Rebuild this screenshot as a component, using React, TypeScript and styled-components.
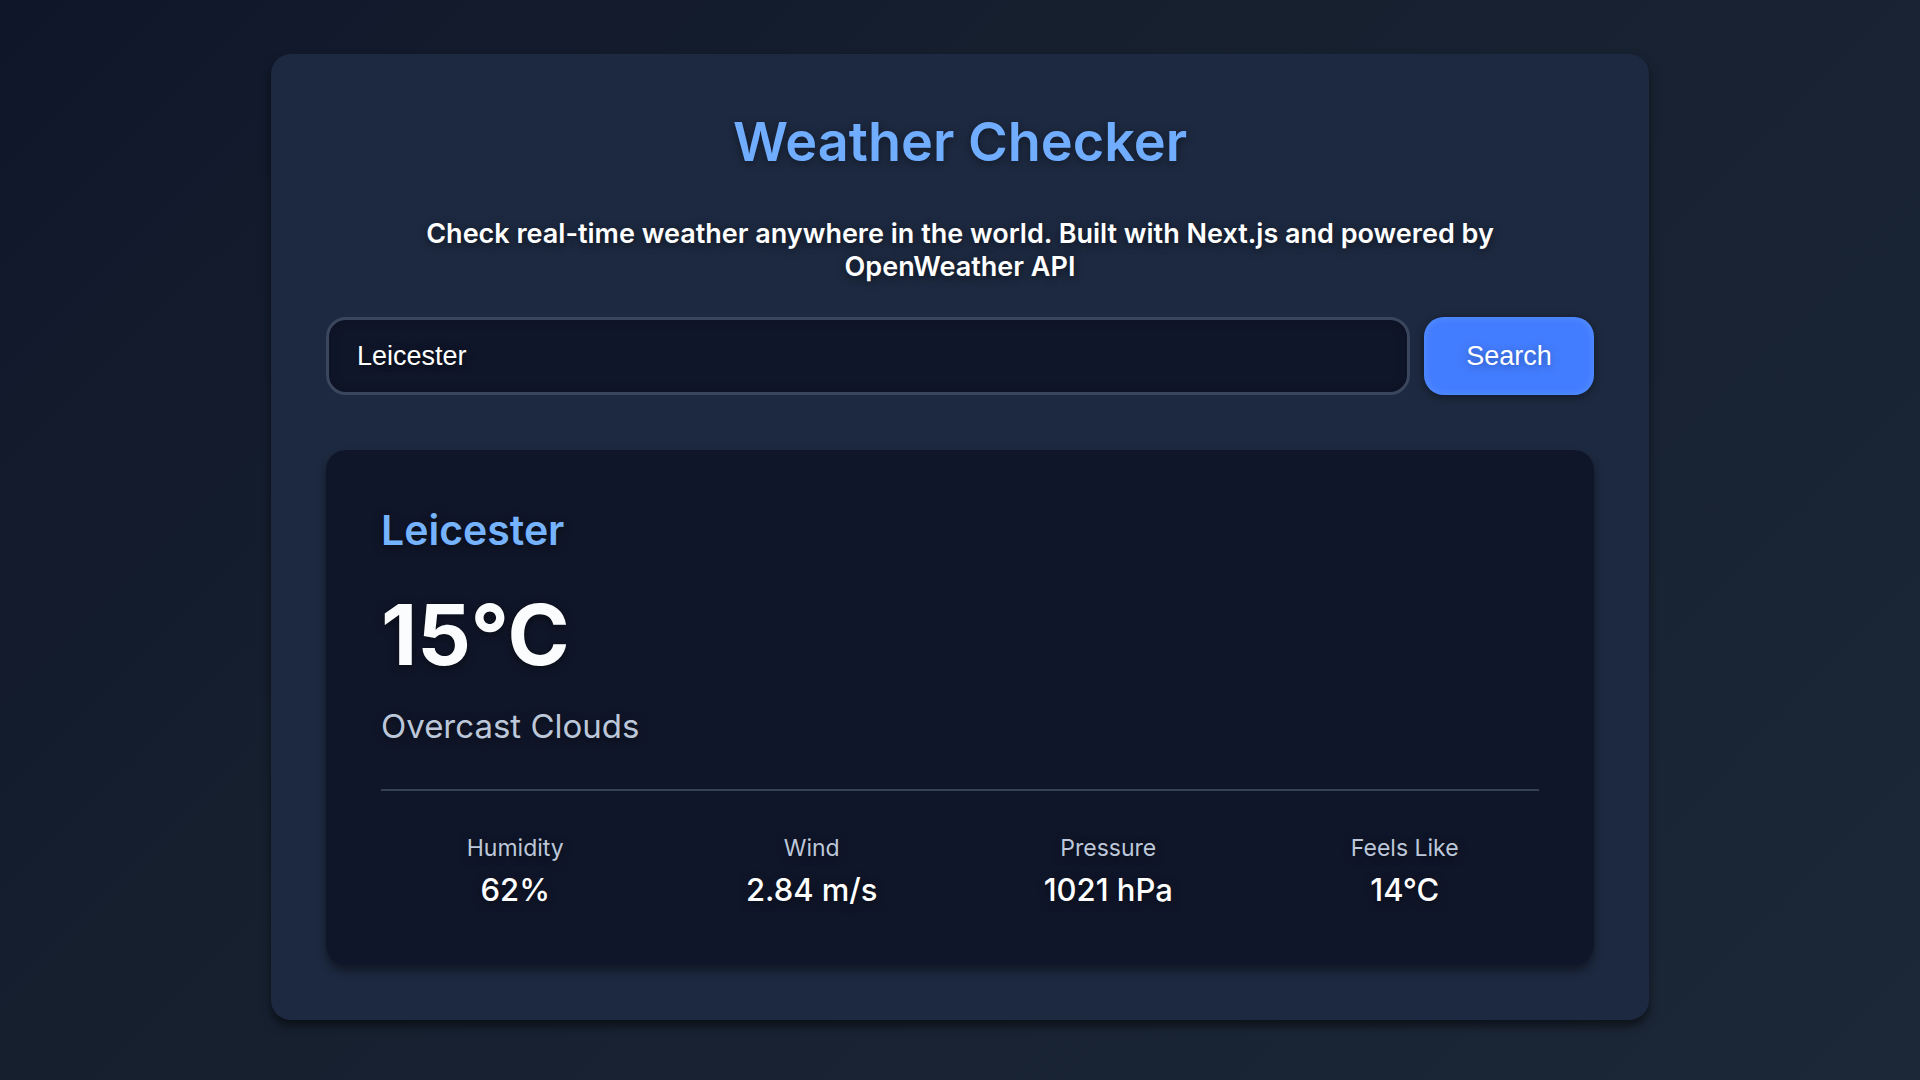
import React, { useState } from "react";
import styled, { createGlobalStyle } from "styled-components";

const GlobalStyle = createGlobalStyle`
  * { box-sizing: border-box; }
  body {
    margin: 0;
    min-height: 100vh;
    color: #ffffff;
    font-family: Inter, "Liberation Sans", sans-serif;
    background: linear-gradient(135deg, #10162a 0%, #151f2e 35%, #1c2737 100%);
  }
  h1, h2, p, dl, dd { margin: 0; }
`;

const Page = styled.main`
  display: flex;
  align-items: center;
  justify-content: center;
  min-height: 100vh;
  padding: 48px 24px 54px;
`;

const Panel = styled.section`
  width: 100%;
  max-width: 1378px;
  padding: 55px;
  border-radius: 20px;
  background: #1d2940;
  box-shadow: 0 6px 10px rgba(0, 0, 0, 0.5);
`;

const Title = styled.h1`
  color: #70adff;
  font-size: 54px;
  font-weight: 600;
  line-height: 66px;
  text-align: center;
  text-shadow: 0 2px 8px rgba(0, 0, 0, 0.4);
`;

const Intro = styled.p`
  margin-top: 42px;
  padding: 0 56px;
  font-size: 27px;
  font-weight: 600;
  line-height: 33px;
  text-align: center;
  text-shadow: 0 2px 8px rgba(0, 0, 0, 0.5);
`;

const SearchForm = styled.form`
  display: flex;
  gap: 14px;
  margin-top: 34px;
`;

const CityInput = styled.input`
  flex: 1;
  min-width: 0;
  height: 78px;
  padding: 0 28px;
  border: 3px solid #39465c;
  border-radius: 20px;
  outline: none;
  background: #101629;
  box-shadow: inset 0 0 8px rgba(0, 10, 25, 0.4);
  color: #ffffff;
  font-family: "Liberation Sans", Arial, sans-serif;
  font-size: 27px;
  text-shadow: 0 2px 8px rgba(0, 0, 0, 0.5);
`;

const SearchButton = styled.button`
  min-width: 170px;
  height: 78px;
  padding: 0 40px;
  border: 0;
  border-radius: 20px;
  background: #437dff;
  box-shadow: 0 2px 8px rgba(0, 0, 0, 0.4), inset 0 0 8px rgba(110, 170, 255, 0.5);
  color: #ffffff;
  font-family: "Liberation Sans", Arial, sans-serif;
  font-size: 27px;
  text-shadow: 0 2px 8px rgba(0, 0, 0, 0.35);
  cursor: pointer;
`;

const WeatherCard = styled.article`
  margin-top: 55px;
  padding: 55px;
  border-radius: 20px;
  background: #101629;
  box-shadow: 0 6px 10px rgba(0, 0, 0, 0.4);
  text-shadow: 0 2px 8px rgba(0, 0, 0, 0.5);
`;

const City = styled.h2`
  color: #76b3ff;
  font-size: 41px;
  font-weight: 600;
  line-height: 50px;
`;

const Temperature = styled.p`
  margin-top: 30px;
  color: #fbfcfe;
  font-size: 84px;
  font-weight: 700;
  line-height: 100px;
`;

const Condition = styled.p`
  margin-top: 21px;
  color: #bcc8da;
  font-size: 33px;
  line-height: 40px;
`;

const Stats = styled.dl`
  display: grid;
  grid-template-columns: repeat(4, 1fr);
  gap: 28px;
  margin-top: 43px;
  padding-top: 42px;
  border-top: 2px solid #344157;
  text-align: center;
`;

const StatLabel = styled.dt`
  color: #bcc8da;
  font-size: 23px;
  line-height: 30px;
`;

const StatValue = styled.dd`
  margin-top: 7px;
  font-size: 31px;
  font-weight: 500;
  line-height: 40px;
`;

const stats = [
  { label: "Humidity", value: "62%" },
  { label: "Wind", value: "2.84 m/s" },
  { label: "Pressure", value: "1021 hPa" },
  { label: "Feels Like", value: "14°C" },
];

export default function App() {
  const [city, setCity] = useState("Leicester");

  return (
    <>
      <GlobalStyle />
      <Page>
        <Panel>
          <Title>Weather Checker</Title>
          <Intro>
            Check real-time weather anywhere in the world. Built with Next.js and powered by OpenWeather API
          </Intro>
          <SearchForm onSubmit={(event) => event.preventDefault()}>
            <CityInput
              type="text"
              aria-label="City"
              value={city}
              onChange={(event) => setCity(event.target.value)}
            />
            <SearchButton type="submit">Search</SearchButton>
          </SearchForm>
          <WeatherCard>
            <City>Leicester</City>
            <Temperature>15°C</Temperature>
            <Condition>Overcast Clouds</Condition>
            <Stats>
              {stats.map((stat) => (
                <div key={stat.label}>
                  <StatLabel>{stat.label}</StatLabel>
                  <StatValue>{stat.value}</StatValue>
                </div>
              ))}
            </Stats>
          </WeatherCard>
        </Panel>
      </Page>
    </>
  );
}
